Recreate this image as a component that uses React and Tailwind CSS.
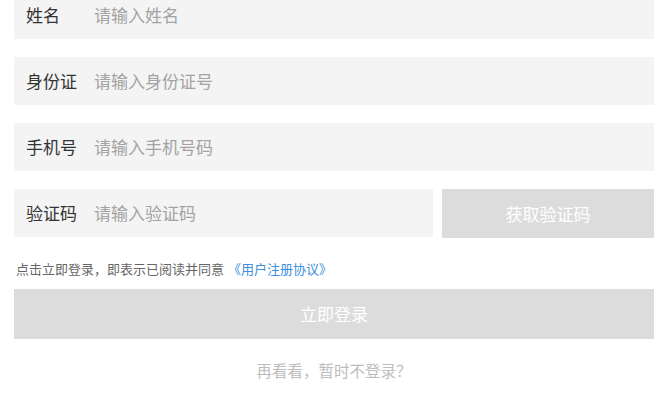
import React, { useState } from "react";

const font = { fontFamily: '"Noto Sans CJK SC", "Noto Sans", sans-serif' };

function Field({ label, placeholder, value, onChange, className = "" }) {
  return (
    <label className={"flex h-[48px] items-center bg-[#f4f4f4] pl-3 " + className}>
      <span className="w-[68px] shrink-0 text-[17px] text-[#333]">{label}</span>
      <input
        className="min-w-0 flex-1 bg-transparent text-[17px] text-[#333] outline-none placeholder:text-[#a3a3a3]"
        type="text"
        placeholder={placeholder}
        value={value}
        onChange={(e) => onChange(e.target.value)}
      />
    </label>
  );
}

export default function App() {
  const [name, setName] = useState("");
  const [idCard, setIdCard] = useState("");
  const [phone, setPhone] = useState("");
  const [code, setCode] = useState("");

  return (
    <div className="h-[415px] overflow-hidden bg-white" style={font}>
      <div className="-mt-[9px] ml-[14px] flex w-[640px] flex-col">
        <div className="flex flex-col gap-[18px]">
          <Field label="姓名" placeholder="请输入姓名" value={name} onChange={setName} />
          <Field label="身份证" placeholder="请输入身份证号" value={idCard} onChange={setIdCard} />
          <Field label="手机号" placeholder="请输入手机号码" value={phone} onChange={setPhone} />
          <div className="flex gap-[9px]">
            <Field
              className="w-[419px]"
              label="验证码"
              placeholder="请输入验证码"
              value={code}
              onChange={setCode}
            />
            <button
              disabled
              className="h-[49px] flex-1 bg-[#dcdcdc] text-[17px] text-white"
            >
              获取验证码
            </button>
          </div>
        </div>
        <p className="mt-[22px] pl-[2px] text-[13px] leading-[17px] text-[#666]">
          点击立即登录，即表示已阅读并同意
          <span className="ml-[4px] text-[#3d8fe0]">《用户注册协议》</span>
        </p>
        <button
          disabled
          className="mt-[12px] h-[50px] w-full bg-[#dcdcdc] text-[17px] text-white"
        >
          立即登录
        </button>
        <div className="mt-[21px] text-center text-[15.5px] leading-[20px] text-[#bdbdbd]">
          再看看，暂时不登录？
        </div>
      </div>
    </div>
  );
}
